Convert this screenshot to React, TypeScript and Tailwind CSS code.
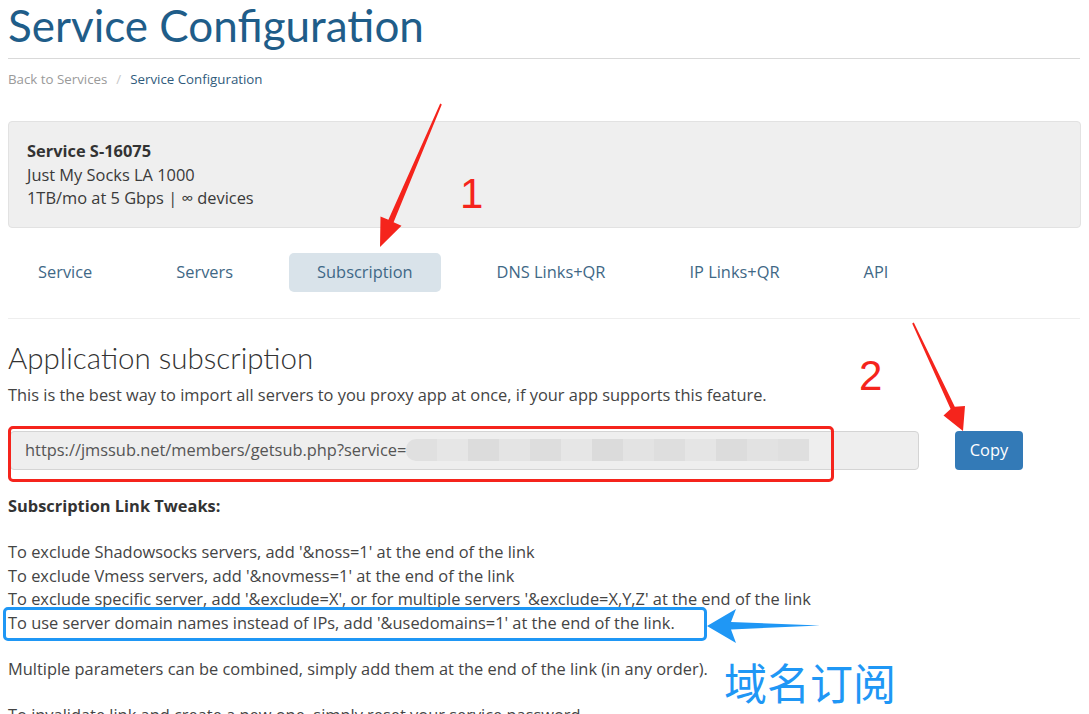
import React from 'react';

const tabs = ['Service', 'Servers', 'Subscription', 'DNS Links+QR', 'IP Links+QR', 'API'];

const tweaks = [
  "To exclude Shadowsocks servers, add '&noss=1' at the end of the link",
  "To exclude Vmess servers, add '&novmess=1' at the end of the link",
  "To exclude specific server, add '&exclude=X', or for multiple servers '&exclude=X,Y,Z' at the end of the link",
  "To use server domain names instead of IPs, add '&usedomains=1' at the end of the link.",
];

const blurBlocks = ['#e0e0e0', '#e6e6e6', '#dcdcdc', '#e4e4e4', '#dddddd', '#e6e6e6', '#dbdbdb', '#e3e3e3', '#dedede', '#e5e5e5', '#dcdcdc', '#e2e2e2', '#dfdfdf'];

function Annotations() {
  return (
    <svg className="absolute left-0 top-0 pointer-events-none" width="1089" height="714" viewBox="0 0 1089 714">
      {/* arrow 1 */}
      <polygon
        points="441.8,104.4 393.6,222.2 401.5,225.8 380,247 380.5,216.5 388.4,219.8 440.2,103.6"
        fill="#f5241c"
      />
      {/* arrow 2 */}
      <polygon
        points="912.2,323.4 950.6,409 943.5,415.5 963,431 965,406 954.8,406.8 913.8,322.6"
        fill="#f5241c"
      />
      {/* blue arrow */}
      <polygon points="707,626 736,609 731,622 820,625.5 731,629.5 736,643" fill="#1f97f5" />
    </svg>
  );
}

export default function App() {
  return (
    <div
      className="relative w-[1089px] h-[714px] overflow-hidden bg-white px-2 text-[#4a4a4a]"
      style={{ fontFamily: '"Open Sans", "Noto Sans", sans-serif' }}
    >
      <h1 className="pt-[1px] text-[44px] leading-[48px] text-[#1f5d89]" style={{ fontFamily: 'Lato, sans-serif' }}>
        Service Configuration
      </h1>
      <div className="mt-[9px] w-[1072px] border-t border-[#d9d9d9]" />

      <div className="mt-[10px] flex items-center text-[13.3px] leading-5">
        <span className="text-[#9a9a9a]">Back to Services</span>
        <span className="px-[9px] text-[#c8c8c8]">/</span>
        <span className="text-[#2f5b7c]">Service Configuration</span>
      </div>

      <div className="mt-[32px] w-[1073px] rounded border border-[#e2e2e2] bg-[#efefef] px-[18px] pt-[17px] pb-[17px] text-[16.4px] leading-[23.5px] text-[#3a3a3a]">
        <div className="font-bold text-[#333]">Service S-16075</div>
        <div>Just My Socks LA 1000</div>
        <div>1TB/mo at 5 Gbps | ∞ devices</div>
      </div>

      <div className="mt-[25px] flex gap-[28px] pl-[2px]">
        {tabs.map((t) => (
          <div
            key={t}
            className={
              'h-[39px] rounded-[5px] px-[28px] flex items-center text-[16.4px] text-[#3f6886] ' +
              (t === 'Subscription' ? 'bg-[#d9e3ea]' : '')
            }
          >
            {t}
          </div>
        ))}
      </div>

      <div className="mt-[26px] w-[1072px] border-t border-[#eeeeee]" />

      <h2 className="mt-[22px] text-[29.5px] leading-[34px] font-light text-[#333]" style={{ fontFamily: 'Lato, sans-serif' }}>
        Application subscription
      </h2>
      <p className="mt-[8px] text-[16.4px] leading-[23.4px] text-[#444]">
        This is the best way to import all servers to you proxy app at once, if your app supports this feature.
      </p>

      <div className="mt-[25px] flex items-center">
        <div className="ml-[2px] h-[39px] w-[909px] rounded border border-[#d4d4d4] bg-[#eeeeee] pl-[14px] flex items-center text-[16.4px] text-[#555]">
          <span>https://jmssub.net/members/getsub.php?service=</span>
          <div className="flex h-[22px] overflow-hidden rounded-l-[10px]">
            {blurBlocks.map((c, i) => (
              <div key={i} className="h-full w-[31px]" style={{ backgroundColor: c }} />
            ))}
          </div>
        </div>
        <button className="ml-[36px] h-[39px] w-[68px] rounded bg-[#337ab7] text-[16.4px] text-white">Copy</button>
      </div>

      <div className="mt-[24px] text-[16.4px] leading-[23.4px] text-[#444]">
        <div className="font-bold text-[#333]">Subscription Link Tweaks:</div>
        <div className="h-[23px]" />
        {tweaks.map((t) => (
          <div key={t}>{t}</div>
        ))}
        <div className="h-[23px]" />
        <div>Multiple parameters can be combined, simply add them at the end of the link (in any order).</div>
        <div className="h-[23px]" />
        <div>To invalidate link and create a new one, simply reset your service password.</div>
      </div>

      {/* annotation boxes */}
      <div className="absolute left-[8px] top-[426px] h-[56px] w-[826px] rounded-[5px] border-[3px] border-[#f5241c]" />
      <div className="absolute left-[3px] top-[607px] h-[34px] w-[704px] rounded-[5px] border-[3px] border-[#1f97f5]" />
      <div className="absolute left-[859px] top-[352px] text-[42px] leading-[48px] text-[#f5241c]" style={{ fontFamily: '"Liberation Sans", sans-serif' }}>
        2
      </div>
      <div className="absolute left-[460px] top-[170px] text-[42px] leading-[48px] text-[#f5241c]" style={{ fontFamily: '"Liberation Sans", sans-serif' }}>
        1
      </div>
      <div
        className="absolute left-[724px] top-[654px] text-[43px] leading-[54px] text-[#1f97f5]"
        style={{ fontFamily: '"Noto Sans CJK SC", sans-serif' }}
      >
        域名订阅
      </div>
      <Annotations />
    </div>
  );
}
